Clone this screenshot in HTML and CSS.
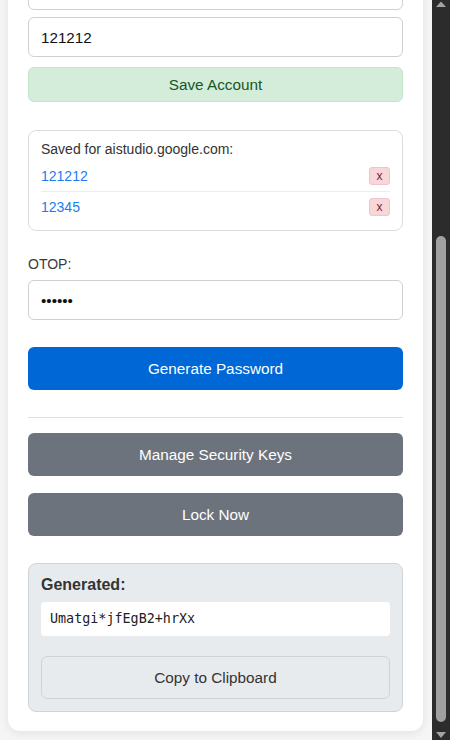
FILE: index.html
```html
<!DOCTYPE html>
<html lang="en">
<head>
<meta charset="utf-8">
<title>Password Generator</title>
<link rel="stylesheet" href="styles.css">
</head>
<body>
<div class="page">
  <main class="main">
    <section class="card">
      <input class="field field-first" type="text" value="" aria-label="Username">
      <input class="field field-user" type="text" value="121212" aria-label="Account">
      <button class="btn btn-save" type="button">Save Account</button>

      <div class="saved">
        <div class="saved-title">Saved for aistudio.google.com:</div>
        <ul class="saved-list">
          <li class="saved-row"><a class="saved-link" href="#">121212</a><button class="del" type="button">x</button></li>
          <li class="saved-row"><a class="saved-link" href="#">12345</a><button class="del" type="button">x</button></li>
        </ul>
      </div>

      <label class="label" for="otop">OTOP:</label>
      <input class="field field-otop" id="otop" type="password" value="123456">

      <button class="btn btn-primary" type="button">Generate Password</button>
      <hr class="divider">
      <button class="btn btn-secondary btn-manage" type="button">Manage Security Keys</button>
      <button class="btn btn-secondary btn-lock" type="button">Lock Now</button>

      <div class="generated">
        <div class="gen-title">Generated:</div>
        <div class="gen-code">Umatgi*jfEgB2+hrXx</div>
        <button class="btn btn-copy" type="button">Copy to Clipboard</button>
      </div>
    </section>
  </main>
  <div class="scrollbar" aria-hidden="true">
    <div class="sb-arrow"><svg width="18" height="17" viewBox="0 0 18 17"><polygon points="9,1.5 14,7 4,7" fill="#a3a3a3"/></svg></div>
    <div class="sb-track"><div class="sb-thumb"></div></div>
    <div class="sb-arrow sb-arrow-down"><svg width="18" height="17" viewBox="0 0 18 17"><polygon points="4,9 14,9 9,15" fill="#a3a3a3"/></svg></div>
  </div>
</div>
</body>
</html>
```

FILE: styles.css
```css
* { box-sizing: border-box; }

html, body {
  margin: 0;
  padding: 0;
  height: 740px;
  overflow: hidden;
}

body {
  font-family: "Liberation Sans", Arial, sans-serif;
  color: #333;
  background: #f5f5f5;
}

.page {
  display: flex;
  height: 740px;
}

.main {
  flex: 1;
  padding: 0 9px 0 8px;
  overflow: hidden;
}

.card {
  display: flex;
  flex-direction: column;
  margin-top: -50px;
  padding: 20px 20px 19px;
  background: #fff;
  border-radius: 12px;
  box-shadow: 0 2px 10px rgba(0, 0, 0, 0.08);
}

.field {
  display: block;
  width: 100%;
  height: 40px;
  padding: 0 12px;
  border: 1px solid #cfcfd4;
  border-radius: 6px;
  background: #fff;
  font-family: "Liberation Sans", Arial, sans-serif;
  font-size: 15.2px;
  color: #111;
  outline: none;
}

.field-first { margin-bottom: 7px; }
.field-user { margin-bottom: 10px; }
.field-otop { margin-bottom: 27px; }

.btn {
  display: block;
  width: 100%;
  border: 0;
  border-radius: 6px;
  font-family: "Liberation Sans", Arial, sans-serif;
  font-size: 15.3px;
  text-align: center;
  cursor: pointer;
}

.btn-save {
  padding: 8px 12px;
  line-height: 17px;
  background: #d4edda;
  border: 1px solid #c3e6cb;
  color: #155724;
  margin-bottom: 28px;
}

.saved {
  border: 1px solid #dcdcdc;
  border-radius: 8px;
  padding: 10px 12px 8px;
  margin-bottom: 25px;
}

.saved-title {
  font-size: 14px;
  line-height: 16px;
  color: #333;
  margin-bottom: 4px;
}

.saved-list {
  list-style: none;
  margin: 0;
  padding: 0;
}

.saved-row {
  display: flex;
  align-items: center;
  justify-content: space-between;
  padding: 6px 0;
  border-bottom: 1px solid #ececec;
}

.saved-row:last-child { border-bottom: 0; }

.saved-link {
  font-size: 14px;
  line-height: 18px;
  color: #1a7cf2;
  text-decoration: none;
}

.del {
  width: 21px;
  height: 18px;
  padding: 0;
  border: 1px solid #f2c4c9;
  border-radius: 3px;
  background: #f8d7da;
  color: #7a2431;
  font-family: "Liberation Sans", Arial, sans-serif;
  font-size: 12px;
  line-height: 15px;
  text-align: center;
}

.label {
  display: block;
  font-size: 14px;
  line-height: 16px;
  color: #3a3a3a;
  margin-bottom: 8px;
}

.btn-primary {
  padding: 12px;
  line-height: 19px;
  background: #0067d6;
  color: #fff;
}

.divider {
  border: 0;
  border-top: 1px solid #e0e0e0;
  margin: 27px 0 15px;
  height: 0;
}

.btn-secondary {
  padding: 12px;
  line-height: 19px;
  background: #6c737d;
  color: #fff;
}

.btn-manage { margin-bottom: 17px; }
.btn-lock { margin-bottom: 27px; }

.generated {
  background: #e8ebee;
  border: 1px solid #d0d4d9;
  border-radius: 8px;
  padding: 12px;
}

.gen-title {
  font-size: 16px;
  line-height: 18px;
  font-weight: bold;
  color: #333;
  margin-bottom: 8px;
}

.gen-code {
  background: #fff;
  border-radius: 4px;
  padding: 9px 9px;
  font-family: "DejaVu Sans Mono", "Liberation Mono", monospace;
  font-size: 13.4px;
  line-height: 16px;
  color: #222;
  margin-bottom: 20px;
}

.btn-copy {
  padding: 12px;
  line-height: 17px;
  background: #e8ebee;
  border: 1px solid #cfd3d8;
  color: #333;
}

.scrollbar {
  width: 18px;
  flex: none;
  display: flex;
  flex-direction: column;
  background: #2c2c2c;
}

.sb-arrow {
  height: 17px;
  flex: none;
}

.sb-arrow svg { display: block; }

.sb-track {
  flex: 1;
}

.sb-thumb {
  width: 10px;
  height: 486px;
  margin: 219px auto 0;
  background: #a0a0a0;
  border-radius: 5px;
}
```
